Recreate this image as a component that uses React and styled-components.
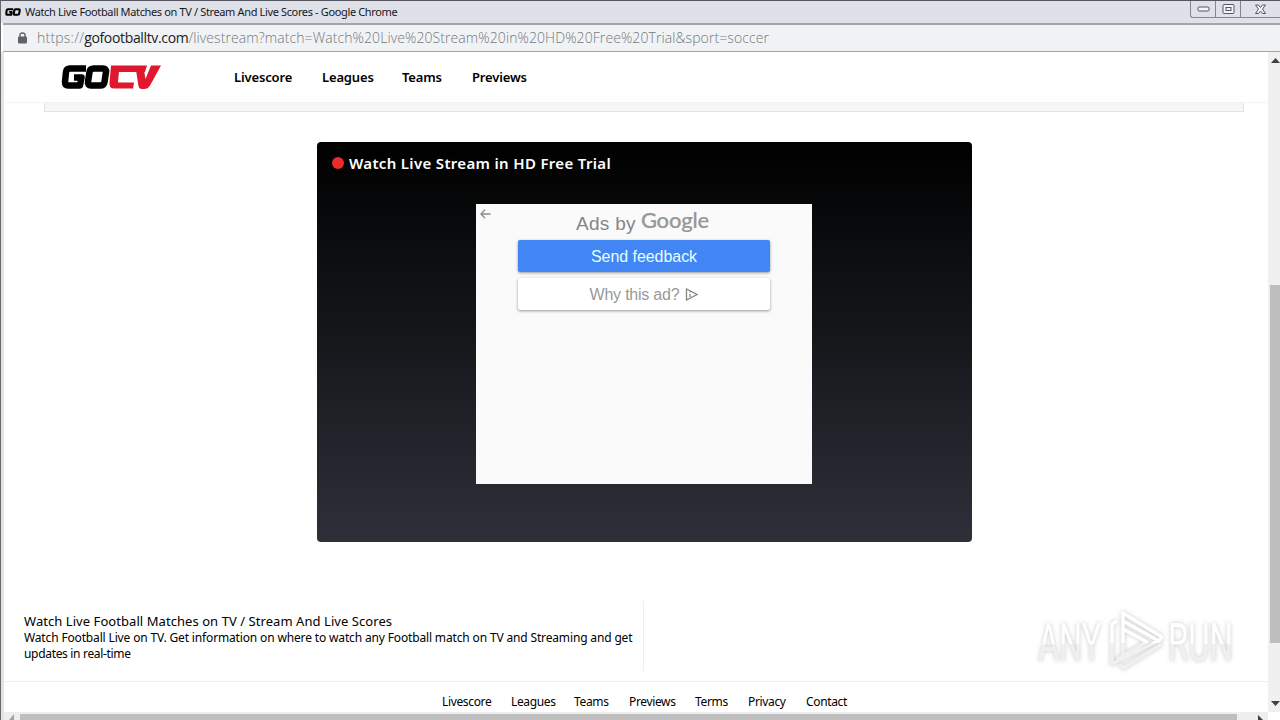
import React from "react";
import styled, { createGlobalStyle } from "styled-components";

const navLinks = [
  { name: "Livescore", width: 88 },
  { name: "Leagues", width: 80 },
  { name: "Teams", width: 70 },
  { name: "Previews", width: 80 },
];

const footerLinks = [
  { name: "Livescore", width: 69 },
  { name: "Leagues", width: 63 },
  { name: "Teams", width: 55 },
  { name: "Previews", width: 66 },
  { name: "Terms", width: 53 },
  { name: "Privacy", width: 58 },
  { name: "Contact", width: 50 },
];

const GoMark = () => (
  <g fill="none" stroke="#000" strokeWidth="6.500" strokeLinejoin="round">
    <path d="M25 3.500H9Q5.500 3.500 5 7L4 17Q4 20.500 7 20.500H19L20.500 12.500H13" />
    <path d="M33 3.500H42Q45.500 3.500 45 7L43.500 17Q43 20.500 39 20.500H30Q26.500 20.500 27 17L28.500 7Q29 3.500 33 3.500Z" />
  </g>
);

const GoTvLogo = () => (
  <svg width="100" height="25" viewBox="0 0 100 25">
    <GoMark />
    <g fill="#e0182d">
      <path d="M50 0.500H86L84 7H58L57 16Q57 17.500 58 17.500H73L72 23.500H53Q48 23.500 48.500 18Z" />
      <path d="M75 5H83L84.500 14L90 0.500H100L89 20.500Q87 24 83 24H81Q78 24 77.500 21Z" />
    </g>
  </svg>
);

const BrowserTop = () => (
  <>
    <TitleBar>
      <svg width="16" height="8" viewBox="0 0 49 24">
        <GoMark />
      </svg>
      <PageTitle>Watch Live Football Matches on TV / Stream And Live Scores - Google Chrome</PageTitle>
      <WindowButtons>
        <WindowButton $width="25px">
          <svg width="13" height="6"><rect x="1" y="1" width="11" height="4" rx="1" /></svg>
        </WindowButton>
        <WindowButton $width="25px">
          <svg width="13" height="11">
            <rect x="1" y="0.500" width="11" height="9" rx="1" />
            <rect x="4" y="3.500" width="5" height="3" />
          </svg>
        </WindowButton>
        <WindowButton $width="39px">
          <svg width="13" height="11">
            <path d="M1.500 1H4.500L6.500 3.500L8.500 1H11.500L8.500 5L11.500 9.500H8.500L6.500 7L4.500 9.500H1.500L4.500 5Z" />
          </svg>
        </WindowButton>
      </WindowButtons>
    </TitleBar>
    <AddressBar>
      <svg width="9" height="12" viewBox="0 0 9 12">
        <path d="M2 5V3Q2 1 4.500 1T7 3V5" fill="none" stroke="#5f6368" strokeWidth="1.400" />
        <rect y="4.500" width="9" height="7" rx="1" fill="#5f6368" />
      </svg>
      <Url>
        <i>https://</i><b>gofootballtv.com</b>/livestream?match=Watch%20Live%20Stream%20in%20HD%20Free%20Trial&amp;sport=soccer
      </Url>
    </AddressBar>
  </>
);

const AdBox = () => (
  <AdWrap>
    <BackArrow width="11" height="10" viewBox="0 0 11 10">
      <path d="M10.500 5H1M5 0.800L1 5L5 9.200" />
    </BackArrow>
    <AdTitle>
      <span>Ads by</span>
      <GoogleText>Google</GoogleText>
    </AdTitle>
    <AdButton $primary>Send feedback</AdButton>
    <AdButton>
      Why this ad?
      <svg width="13" height="13" viewBox="0 0 13 13">
        <path d="M1.500 1V12L12 6.500Z M5 6V9 M5 3.500V4.500" />
      </svg>
    </AdButton>
  </AdWrap>
);

const Watermark = () => (
  <WatermarkWrap>
    <MarkText $scale="0.610">ANY</MarkText>
    <svg width="60" height="66" viewBox="0 0 60 66">
      <defs>
        <linearGradient id="fade" x1="0" y1="0" x2="0" y2="66" gradientUnits="userSpaceOnUse">
          <stop offset="0.530" stopColor="#fff" />
          <stop offset="0.530" stopColor="#f0f0f0" />
        </linearGradient>
      </defs>
      <g fill="none" strokeLinejoin="round" stroke="url(#fade)" strokeWidth="3.500">
        <path d="M17 49V5L56 29L53 33L17 13M11 13L6 16V56L52 33M17 21L41 34L11 51M56 36L17 60L14 56" />
      </g>
    </svg>
    <MarkText $scale="0.620">RUN</MarkText>
  </WatermarkWrap>
);

const App = () => {
  return (
    <Window>
      <GlobalStyle />
      <BrowserTop />
      <Body>
        <Main>
          <Page>
            <Header>
              <GoTvLogo />
              <Nav>
                {navLinks.map((link) => (
                  <NavItem key={link.name} $width={link.width}>{link.name}</NavItem>
                ))}
              </Nav>
            </Header>
            <Strip />
            <Player>
              <PlayerTitle>
                <LiveDot />
                Watch Live Stream in HD Free Trial
              </PlayerTitle>
              <AdBox />
            </Player>
            <Info>
              <InfoText>
                <h1>Watch Live Football Matches on TV / Stream And Live Scores</h1>
                <p>Watch Football Live on TV. Get information on where to watch any Football match on TV and Streaming and get</p>
                <p className="last">updates in real-time</p>
              </InfoText>
            </Info>
            <Footer>
              {footerLinks.map((link) => (
                <FooterItem key={link.name} $width={link.width}>{link.name}</FooterItem>
              ))}
            </Footer>
          </Page>
          <BottomScroll>
            <svg width="16" height="8"><path d="M10 2V8H5Z" fill="#a3a3a3" /></svg>
            <BottomThumb />
            <svg width="31" height="8"><path d="M21 3L26 8H21Z" fill="#404040" /></svg>
          </BottomScroll>
        </Main>
        <SideScroll>
          <svg width="12" height="16"><path d="M3 11L7.500 6L12 11Z" fill="#404040" /></svg>
          <SideThumb />
          <svg width="12" height="16"><path d="M3 5H12L7.500 10Z" fill="#404040" /></svg>
        </SideScroll>
      </Body>
      <Watermark />
    </Window>
  );
};

const GlobalStyle = createGlobalStyle`
  * {
    box-sizing: border-box;
  }
  body {
    margin: 0;
    overflow: hidden;
    font-family: "Noto Sans", "Open Sans", sans-serif;
  }
  svg {
    display: block;
    flex-shrink: 0;
  }
`;

const Window = styled.div`
  position: relative;
  display: flex;
  flex-direction: column;
  width: 1280px;
  height: 720px;
  overflow: hidden;
  background-color: #fff;
  border-top: 1px solid #555560;
  border-left: 1px solid #68686c;
`;

const TitleBar = styled.div`
  display: flex;
  align-items: center;
  height: 22px;
  padding-left: 4px;
  background-color: #dfe1e9;
`;

const PageTitle = styled.div`
  margin-left: 4px;
  padding-bottom: 2px;
  color: #17171a;
  font-size: 11px;
  letter-spacing: -0.360px;
  white-space: nowrap;
`;

const WindowButtons = styled.div`
  display: flex;
  align-self: flex-start;
  margin-left: auto;
  height: 17px;
  border-left: 1px solid #85868d;
  border-bottom: 1px solid #85868d;
  border-bottom-left-radius: 3px;
`;

const WindowButton = styled.div`
  display: flex;
  align-items: center;
  justify-content: center;
  width: ${(props) => props.$width};
  border-right: 1px solid #85868d;
  &:last-child {
    border-right: none;
  }
  svg {
    fill: #f4f4f7;
    stroke: #555760;
  }
`;

const AddressBar = styled.div`
  display: flex;
  align-items: center;
  height: 29px;
  margin-left: 2px;
  padding-left: 15px;
  background-color: #f0f3f5;
  border-top: 2px solid #a3a4a7;
  border-bottom: 1px solid #a3a4a6;
`;

const Url = styled.div`
  margin-left: 10px;
  padding-bottom: 1px;
  color: #75787b;
  font-family: "Open Sans", sans-serif;
  font-size: 14px;
  font-weight: 300;
  letter-spacing: 0.090px;
  white-space: nowrap;
  i {
    font-style: normal;
    letter-spacing: 0.220px;
  }
  b {
    color: #202124;
    font-weight: 400;
    letter-spacing: -0.340px;
  }
`;

const Body = styled.div`
  display: flex;
  flex: 1;
  min-height: 0;
  border-left: 3px solid #e7e3e4;
`;

const Main = styled.div`
  display: flex;
  flex-direction: column;
  width: 1264px;
`;

const Page = styled.div`
  height: 660px;
  overflow: hidden;
`;

const Header = styled.div`
  display: flex;
  align-items: center;
  height: 51px;
  padding-left: 57px;
  border-bottom: 1px solid #f3f3f3;
`;

const Nav = styled.div`
  display: flex;
  margin-left: 73px;
`;

const NavItem = styled.div`
  width: ${(props) => props.$width}px;
  color: #000;
  font-size: 13px;
  font-weight: 600;
  letter-spacing: -0.150px;
`;

const Strip = styled.div`
  height: 9px;
  margin: 0 24px 0 40px;
  background-color: #f6f6f6;
  border: 1px solid #e2e2e2;
  border-top: none;
`;

const Player = styled.div`
  width: 655px;
  height: 400px;
  margin: 30px 0 0 313px;
  padding-top: 9px;
  border-radius: 4px;
  background: linear-gradient(#000, #15181b 50%, #2d3039);
`;

const PlayerTitle = styled.div`
  display: flex;
  align-items: center;
  height: 23px;
  padding-left: 15px;
  color: #fff;
  font-size: 15px;
  font-weight: 600;
  letter-spacing: 0.330px;
  white-space: nowrap;
`;

const LiveDot = styled.div`
  width: 12px;
  height: 12px;
  margin-right: 5px;
  border-radius: 50%;
  background-color: #ee2b2b;
`;

const AdWrap = styled.div`
  position: relative;
  display: flex;
  flex-direction: column;
  align-items: center;
  width: 336px;
  height: 280px;
  margin: 30px 0 0 159px;
  background-color: #fafafa;
  font-family: "Liberation Sans", Arial, sans-serif;
`;

const BackArrow = styled.svg`
  position: absolute;
  top: 5px;
  left: 4px;
  fill: none;
  stroke: #8a8a8a;
  stroke-width: 1.3;
`;

const AdTitle = styled.div`
  display: flex;
  height: 36px;
  padding: 9px 3px 0 0;
  color: #858585;
  font-size: 19px;
  line-height: 22px;
  letter-spacing: 0.300px;
  white-space: nowrap;
`;

const GoogleText = styled.span`
  margin: -4px 0 0 5px;
  color: #979797;
  font-family: Lato, sans-serif;
  font-size: 22px;
  font-weight: 500;
  letter-spacing: -0.200px;
  -webkit-text-stroke: 0.2px #979797;
`;

const AdButton = styled.div`
  display: flex;
  align-items: center;
  justify-content: center;
  width: 252px;
  height: 32px;
  margin-bottom: 6px;
  padding-top: 2px;
  border-radius: 2px;
  background-color: ${(props) => (props.$primary ? "#4285f4" : "#fff")};
  box-shadow: 0 1px 3px rgba(0, 0, 0, 0.4);
  color: ${(props) => (props.$primary ? "#e5ffff" : "#999")};
  font-size: 16px;
  letter-spacing: ${(props) => (props.$primary ? "-0.050px" : "-0.220px")};
  svg {
    margin: -2px 0 0 6px;
    fill: none;
    stroke: #858585;
    stroke-width: 1.3;
  }
`;

const Info = styled.div`
  height: 140px;
  padding-top: 59px;
  border-bottom: 1px solid #eee;
`;

const InfoText = styled.div`
  width: 640px;
  height: 70px;
  padding: 12px 0 0 20px;
  border-right: 1px solid #eee;
  color: #000;
  white-space: nowrap;
  h1 {
    margin: 0;
    font-size: 13px;
    font-weight: 400;
    line-height: 17px;
    letter-spacing: 0.060px;
  }
  p {
    margin: 0;
    font-size: 12px;
    line-height: 16px;
    letter-spacing: -0.150px;
  }
  .last {
    letter-spacing: -0.320px;
  }
`;

const Footer = styled.div`
  display: flex;
  padding: 11px 0 0 438px;
`;

const FooterItem = styled.div`
  width: ${(props) => props.$width}px;
  color: #000;
  font-size: 12px;
  line-height: 18px;
  letter-spacing: -0.350px;
`;

const BottomScroll = styled.div`
  display: flex;
  height: 8px;
  background-color: #eee;
`;

const BottomThumb = styled.div`
  flex: 1;
  margin-top: 2px;
  background-color: #bebebe;
`;

const SideScroll = styled.div`
  display: flex;
  flex-direction: column;
  justify-content: space-between;
  width: 12px;
  height: 660px;
  background-color: #f0f0f0;
`;

const SideThumb = styled.div`
  width: 10px;
  height: 358px;
  margin: 217px 0 auto 2px;
  background-color: #bebebe;
`;

const WatermarkWrap = styled.div`
  position: absolute;
  top: 607px;
  left: 1037px;
  display: flex;
  align-items: center;
  filter: drop-shadow(0 0 2px rgba(0, 0, 0, 0.22));
`;

const MarkText = styled.div`
  width: 110px;
  margin: 3px -42px 0 0;
  font-family: Roboto, sans-serif;
  font-size: 53px;
  line-height: 62px;
  white-space: nowrap;
  color: transparent;
  background: linear-gradient(#fff 51%, #f0f0f0 51%);
  background-clip: text;
  -webkit-background-clip: text;
  transform: scaleX(${(props) => props.$scale});
  transform-origin: left;
  svg + & {
    margin-left: 2px;
  }
`;

export default App;
